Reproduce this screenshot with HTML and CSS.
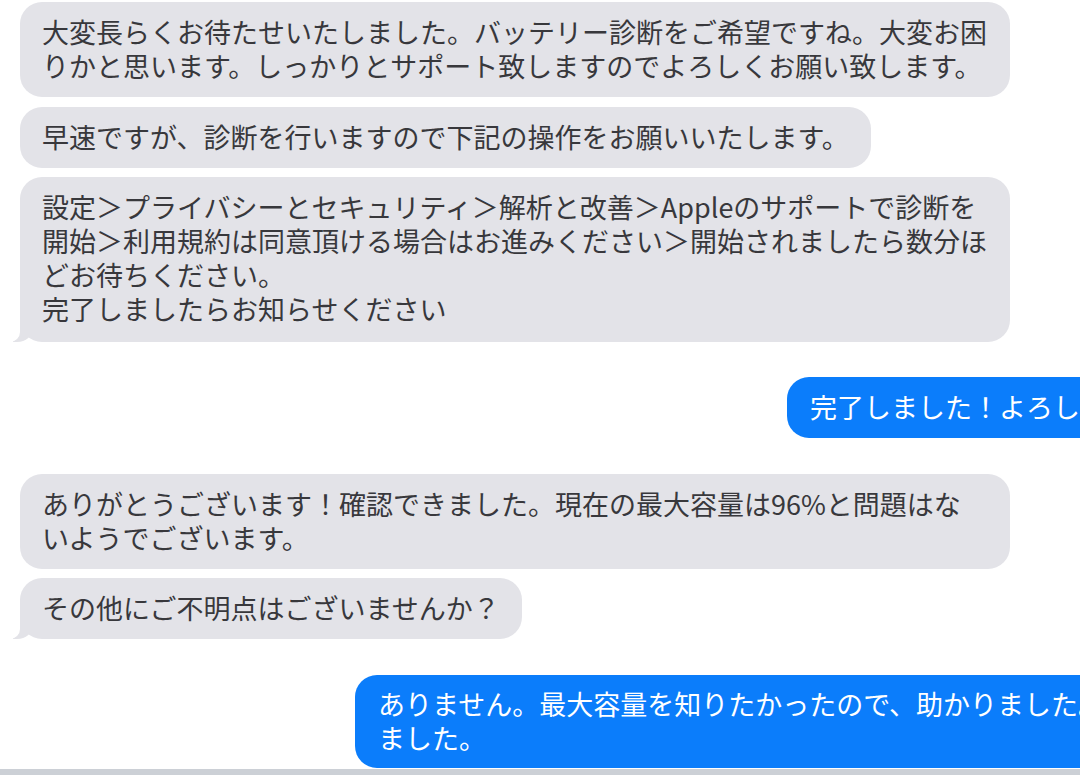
FILE: index.html
```html
<!DOCTYPE html>
<html lang="ja">
<head>
<meta charset="utf-8">
<title>Messages</title>
<link rel="stylesheet" href="styles.css">
</head>
<body>
<div class="screen">
  <div class="thread">
    <div class="bubble in wide">大変長らくお待たせいたしました。バッテリー診断をご希望ですね。大変お困<br>りかと思います。しっかりとサポート致しますのでよろしくお願い致します。</div>
    <div class="bubble in next">早速ですが、診断を行いますので下記の操作をお願いいたします。</div>
    <div class="bubble in wide next tail tall">設定＞プライバシーとセキュリティ＞解析と改善＞Appleのサポートで診断を<br>開始＞利用規約は同意頂ける場合はお進みください＞開始されましたら数分ほ<br>どお待ちください。<br>完了しましたらお知らせください</div>
    <div class="bubble out group">完了しました！よろしくお願いいたします</div>
    <div class="bubble in wide group">ありがとうございます！確認できました。現在の最大容量は96%と問題はな<br>いようでございます。</div>
    <div class="bubble in next tail">その他にご不明点はございませんか？</div>
    <div class="bubble out wide group last">ありません。最大容量を知りたかったので、助かりました。ありがとうござい<br>ました。</div>
  </div>
  <div class="inputbar"></div>
</div>
</body>
</html>
```
FILE: styles.css
```css
html, body {
  margin: 0;
  padding: 0;
  background: #ffffff;
  overflow: hidden;
}

.screen {
  width: 1080px;
  height: 775px;
  overflow: hidden;
  display: flex;
  flex-direction: column;
}

.thread {
  width: 1345px;
  padding: 2px 0 0 20px;
  box-sizing: border-box;
  display: flex;
  flex-direction: column;
  align-items: flex-start;
}

.bubble {
  position: relative;
  box-sizing: border-box;
  max-width: 990px;
  padding: 13px 22px 14px 22px;
  border-radius: 22px;
  font-family: "Noto Sans CJK JP", "Noto Sans", sans-serif;
  font-size: 27px;
  line-height: 34px;
  letter-spacing: 0;
  white-space: nowrap;
}

.bubble.wide {
  width: 990px;
}

.bubble.tall {
  padding-bottom: 16px;
}

.in {
  background: #e3e3e8;
  color: #38383c;
}

.out {
  background: #0b7dfb;
  color: #ffffff;
  align-self: flex-end;
  padding-left: 23px;
}

.next {
  margin-top: 9px;
}

.bubble.in.next:nth-child(2) {
  margin-top: 10px;
}

.group {
  margin-top: 36px;
}

.bubble.out.group:nth-child(4) {
  margin-top: 35px;
}

.tail::before {
  content: "";
  position: absolute;
  left: -7px;
  bottom: 0;
  width: 20px;
  height: 22px;
  background: #e3e3e8;
  border-bottom-right-radius: 16px 14px;
}

.tail::after {
  content: "";
  position: absolute;
  left: -10px;
  bottom: 0;
  width: 10px;
  height: 22px;
  background: #ffffff;
  border-bottom-right-radius: 10px;
}

.last {
  padding-top: 12px;
  padding-bottom: 13px;
}

.inputbar {
  margin-top: auto;
  height: 6px;
  background: #ccd0d6;
  flex-shrink: 0;
}
```
